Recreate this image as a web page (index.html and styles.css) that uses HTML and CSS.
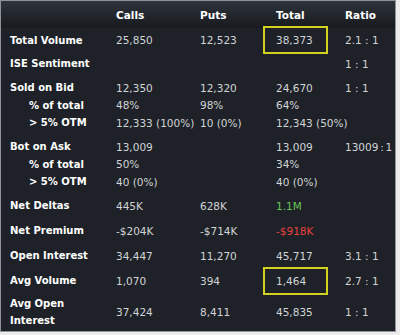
FILE: index.html
```html
<!DOCTYPE html>
<html>
<head>
<meta charset="utf-8">
<link rel="stylesheet" href="styles.css">
</head>
<body>
<div class="panel">
  <div class="row head">
    <span></span><span>Calls</span><span>Puts</span><span>Total</span><span>Ratio</span>
  </div>
  <div class="row r24">
    <span class="lbl">Total Volume</span><span>25,850</span><span>12,523</span><span><span class="hl">38,373</span></span><span>2.1 : 1</span>
  </div>
  <div class="row r23">
    <span class="lbl">ISE Sentiment</span><span></span><span></span><span></span><span>1 : 1</span>
  </div>
  <div class="group">
    <div class="row sub">
      <span class="lbl">Sold on Bid</span><span>12,350</span><span>12,320</span><span>24,670</span><span>1 : 1</span>
    </div>
    <div class="row sub">
      <span class="lbl ind">% of total</span><span>48%</span><span>98%</span><span>64%</span><span></span>
    </div>
    <div class="row sub">
      <span class="lbl ind">&gt; 5% OTM</span><span>12,333 (100%)</span><span>10 (0%)</span><span>12,343 (50%)</span><span></span>
    </div>
  </div>
  <div class="group">
    <div class="row sub">
      <span class="lbl">Bot on Ask</span><span>13,009</span><span></span><span>13,009</span><span class="tight">13009 : 1</span>
    </div>
    <div class="row sub">
      <span class="lbl ind">% of total</span><span>50%</span><span></span><span>34%</span><span></span>
    </div>
    <div class="row sub">
      <span class="lbl ind">&gt; 5% OTM</span><span>40 (0%)</span><span></span><span>40 (0%)</span><span></span>
    </div>
  </div>
  <div class="row r25">
    <span class="lbl">Net Deltas</span><span>445K</span><span>628K</span><span class="pos">1.1M</span><span></span>
  </div>
  <div class="row r25">
    <span class="lbl">Net Premium</span><span>-$204K</span><span>-$714K</span><span class="neg">-$918K</span><span></span>
  </div>
  <div class="row r25">
    <span class="lbl">Open Interest</span><span>34,447</span><span>11,270</span><span>45,717</span><span>3.1 : 1</span>
  </div>
  <div class="row r25">
    <span class="lbl">Avg Volume</span><span>1,070</span><span>394</span><span><span class="hl">1,464</span></span><span>2.7 : 1</span>
  </div>
  <div class="row last">
    <span class="lbl two">Avg Open<br>Interest</span><span>37,424</span><span>8,411</span><span>45,835</span><span>1 : 1</span>
  </div>
</div>
</body>
</html>
```
FILE: styles.css
```css
html, body {
  margin: 0;
  padding: 0;
  background: #ececec;
}
body {
  width: 400px;
  height: 335px;
  overflow: hidden;
}
.panel {
  width: 396px;
  height: 332px;
  box-sizing: border-box;
  border: 1px solid #8f9296;
  background: #1e2228;
  font-family: "DejaVu Sans", "Liberation Sans", sans-serif;
  font-size: 10.5px;
  color: #d2d4d6;
  overflow: hidden;
}
.row {
  display: grid;
  grid-template-columns: 106px 84px 76px 69px 1fr;
  padding-left: 9px;
  align-items: center;
  white-space: nowrap;
}
.head {
  height: 27px;
  background: linear-gradient(#2e343c, #171a1e);
  color: #ffffff;
  font-weight: bold;
  font-size: 10.5px;
}
.r24 { height: 24px; }
.r23 { height: 23px; }
.r25 { height: 25px; }
.group {
  padding: 4px 0 2.5px;
}
.sub { height: 17.5px; }
.last { height: 38px; }
.lbl {
  color: #ffffff;
  font-weight: bold;
  font-size: 10px;
}
.ind { padding-left: 19px; }
.two { line-height: 17px; }
.tight { word-spacing: -1.5px; }
.pos { color: #6cc45a; }
.neg { color: #e8403f; }
.hl {
  display: inline-block;
  box-sizing: border-box;
  width: 65px;
  margin: -8px 0 -8px -13px;
  padding: 6px 0 6px 11px;
  border: 2px solid #d2d21e;
}
```
